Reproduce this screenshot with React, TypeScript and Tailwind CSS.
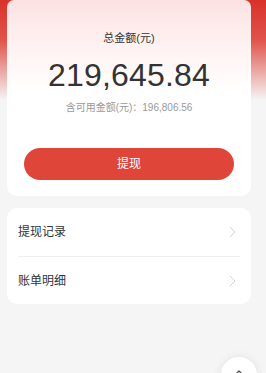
import React from 'react'

const font = { fontFamily: '"Liberation Sans", "Noto Sans CJK SC", sans-serif' }

function Chevron() {
  return (
    <svg width="7" height="12" viewBox="0 0 7 12" fill="none" className="shrink-0">
      <path d="M1 1l5 5-5 5" stroke="#d4d4d4" strokeWidth="1" strokeLinecap="round" strokeLinejoin="round" />
    </svg>
  )
}

export default function App() {
  return (
    <div
      style={font}
      className="relative min-h-screen w-full overflow-hidden bg-[#f5f5f5] bg-[linear-gradient(180deg,#d8322a_0px,#e0534b_40px,#f5f5f5_100px)] pl-[7px] pr-[15px]"
    >
      {/* balance card */}
      <div className="rounded-t-[7px] rounded-b-[10px] bg-[linear-gradient(180deg,#fce2e2_0px,#fff3f3_50px,#ffffff_92px)] px-[17px] pt-[31px] pb-[16px] flex flex-col items-center">
        <div className="text-[11px] leading-[14px] text-[#333]">总金额(元)</div>
        <div className="mt-[12px] text-[32px] leading-[36px] text-[#333] tracking-[0.2px]">219,645.84</div>
        <div className="mt-[8px] text-[10px] leading-[14px] text-[#999]">含可用金额(元)：196,806.56</div>
        <button className="mt-[33px] h-[32px] w-full rounded-full bg-[#e0453a] text-[12px] text-white">
          提现
        </button>
      </div>

      {/* menu card */}
      <div className="mt-[12px] rounded-[10px] bg-white px-[11px]">
        <div className="flex h-[48px] items-center justify-between pr-[4px]">
          <span className="text-[12px] text-[#333]">提现记录</span>
          <Chevron />
        </div>
        <div className="h-px bg-[#eeeeee]" />
        <div className="flex h-[47px] items-center justify-between pr-[4px]">
          <span className="text-[12px] text-[#333]">账单明细</span>
          <Chevron />
        </div>
      </div>

      {/* floating button */}
      <div className="absolute right-[9px] top-[357px] flex h-[36px] w-[36px] items-start justify-center rounded-full bg-white pt-[11px] shadow-[0_0_10px_rgba(0,0,0,0.08)]">
        <svg width="10" height="10" viewBox="0 0 10 10" fill="none">
          <path d="M2 6l3-3 3 3" stroke="#555" strokeWidth="1.4" strokeLinecap="round" strokeLinejoin="round" />
        </svg>
      </div>
    </div>
  )
}
